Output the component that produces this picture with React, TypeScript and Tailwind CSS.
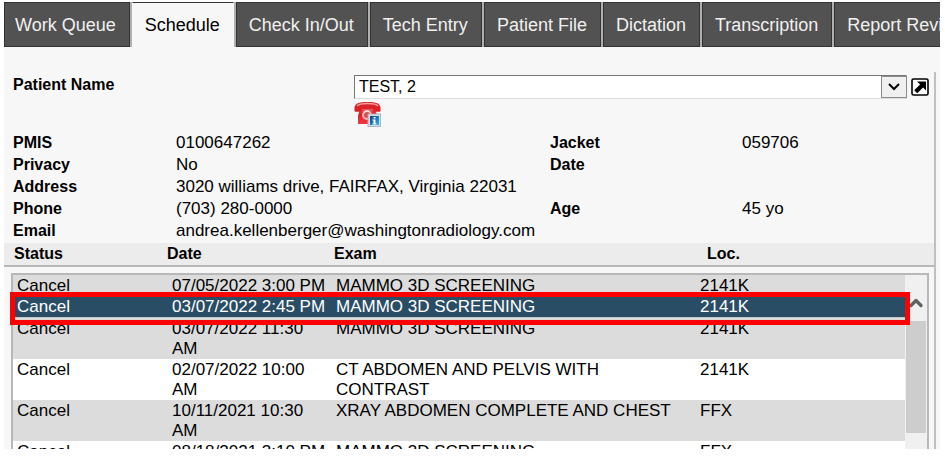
import { ChevronUp } from "lucide-react";
import clsx from "clsx";

const TABS = [
  "Work Queue",
  "Schedule",
  "Check In/Out",
  "Tech Entry",
  "Patient File",
  "Dictation",
  "Transcription",
  "Report Review",
];

const DETAILS = [
  { label: "PMIS", value: "0100647262", sideLabel: "Jacket", sideValue: "059706" },
  { label: "Privacy", value: "No", sideLabel: "Date", sideValue: "" },
  { label: "Address", value: "3020 williams drive, FAIRFAX, Virginia 22031", sideLabel: "", sideValue: "" },
  { label: "Phone", value: "(703) 280-0000", sideLabel: "Age", sideValue: "45 yo" },
  { label: "Email", value: "andrea.kellenberger@washingtonradiology.com", sideLabel: "", sideValue: "" },
];

const EXAMS = [
  { status: "Cancel", date: "07/05/2022 3:00 PM", exam: "MAMMO 3D SCREENING", loc: "2141K" },
  { status: "Cancel", date: "03/07/2022 2:45 PM", exam: "MAMMO 3D SCREENING", loc: "2141K", selected: true },
  { status: "Cancel", date: "03/07/2022 11:30 AM", exam: "MAMMO 3D SCREENING", loc: "2141K" },
  { status: "Cancel", date: "02/07/2022 10:00 AM", exam: "CT ABDOMEN AND PELVIS WITH CONTRAST", loc: "2141K" },
  { status: "Cancel", date: "10/11/2021 10:30 AM", exam: "XRAY ABDOMEN COMPLETE AND CHEST", loc: "FFX" },
  { status: "Cancel", date: "08/18/2021 3:10 PM", exam: "MAMMO 3D SCREENING", loc: "FFX" },
];

function PhoneInfoIcon() {
  return (
    <svg width="27" height="26" viewBox="0 0 27 26" aria-hidden="true">
      <defs>
        <linearGradient id="phone-red" x1="0" y1="0" x2="0" y2="1">
          <stop offset="0" stopColor="#f4696b" />
          <stop offset="0.35" stopColor="#dc1f26" />
          <stop offset="1" stopColor="#ee3b3f" />
        </linearGradient>
        <linearGradient id="info-blue" x1="0" y1="0" x2="1" y2="1">
          <stop offset="0" stopColor="#123f7c" />
          <stop offset="1" stopColor="#25b4ee" />
        </linearGradient>
      </defs>
      <path d="M6 7h15l2 8v8H4v-8z" fill="url(#phone-red)" />
      <path
        d="M0.500 7C0.500 2.500 5 1 13.500 1S26.500 2.500 26.500 7v2.500c0 .8-.5 1.300-1.300 1.300h-4.700c-.8 0-1.300-.5-1.300-1.300V8H7.800v1.500c0 .8-.5 1.300-1.300 1.300H1.800c-.8 0-1.300-.5-1.300-1.300z"
        fill="#d92228"
      />
      <path d="M3 5c2-2.200 6-2.500 10.500-2.500S22 2.800 24 5" fill="none" stroke="#f79a9a" strokeWidth="1.500" />
      <circle cx="13" cy="14" r="5" fill="#f2b6b6" />
      <circle cx="13" cy="14" r="3" fill="#e0474a" />
      <path d="M10 12.500a3.500 3.500 0 0 1 5-2" fill="none" stroke="#fff" strokeWidth="1" />
      <rect x="14" y="13" width="12.500" height="12.500" fill="#d3dee6" stroke="#a9b4bc" />
      <rect x="16" y="15" width="9" height="9" fill="url(#info-blue)" />
      <path d="M19.500 16h2v1.500h-2zM18.500 18.500h3v4h1v1h-4v-1h1v-3h-1z" fill="#fff" />
    </svg>
  );
}

function OpenIcon() {
  return (
    <svg width="18" height="18" viewBox="0 0 18 18" aria-hidden="true">
      <rect x="1" y="1" width="16" height="16" rx="1.500" fill="#fff" stroke="#000" strokeWidth="1.600" />
      <path d="M6 3.500h9v9l-2.900-2.900L6.200 15.200 3.200 12.300l5.900-5.700z" fill="#000" />
    </svg>
  );
}

function TabBar() {
  return (
    <div role="tablist" className="flex gap-0.5 overflow-hidden bg-[#b0b0b0]">
      {TABS.map((tab) => (
        <button
          key={tab}
          role="tab"
          aria-selected={tab === "Schedule"}
          className={clsx(
            "h-[45px] shrink-0 whitespace-nowrap border pr-[13px] pl-3 text-lg first:pl-2.5",
            tab === "Schedule"
              ? "border-x-[#f7f7f7] border-b-[#f7f7f7] border-t-[#333] bg-[#f7f7f7] text-black"
              : "border-[#333] bg-[#525252] text-[#f0f0f0]"
          )}
        >
          {tab}
        </button>
      ))}
    </div>
  );
}

function PatientPicker() {
  return (
    <div className="grid grid-cols-[341px_1fr] pl-[9px] pr-[5px]">
      <label htmlFor="patient" className="text-base leading-5 font-bold">
        Patient Name
      </label>
      <div>
        <div className="flex items-center gap-1">
          <div className="relative grow">
            <select
              id="patient"
              className="block h-6 w-full appearance-none border border-b-[#ddd] border-l-[#777] border-r-[#ddd] border-t-[#777] bg-white px-1 text-base leading-5"
            >
              <option>TEST, 2</option>
            </select>
            <span className="pointer-events-none absolute inset-y-0 right-0 my-px flex w-[26px] items-center justify-center border border-[#8a8a8a] bg-[#f0f0f0]">
              <svg width="12" height="8" viewBox="0 0 12 8" fill="none" stroke="#000" strokeWidth="2" aria-hidden="true">
                <path d="M1 1l5 5 5-5" />
              </svg>
            </span>
          </div>
          <button aria-label="Open patient">
            <OpenIcon />
          </button>
        </div>
        <button aria-label="Contact information" className="mt-0.5 block">
          <PhoneInfoIcon />
        </button>
      </div>
    </div>
  );
}

function PatientDetails() {
  return (
    <dl className="pt-[5px] pb-px pl-[9px]">
      {DETAILS.map((row) => (
        <div
          key={row.label}
          className="grid grid-cols-[163px_1fr_192px_192px] text-[17px] leading-[22px]"
        >
          <dt className="text-base leading-[22px] font-bold">{row.label}</dt>
          <dd>{row.value}</dd>
          {row.sideLabel && (
            <>
              <dt className="text-base leading-[22px] font-bold">{row.sideLabel}</dt>
              <dd>{row.sideValue}</dd>
            </>
          )}
        </div>
      ))}
    </dl>
  );
}

function ExamList() {
  return (
    <div className="relative mt-1.5 mr-[5px] ml-[7px]">
      <div className="flex h-[176px] overflow-hidden border-2 border-b-0 border-[#b8b8b8] bg-[#f0f0f0]">
        <table aria-label="Exams" className="w-full table-fixed self-start text-[17px] leading-5">
          <colgroup>
            <col className="w-[155px]" />
            <col className="w-[164px]" />
            <col />
            <col className="w-[209px]" />
          </colgroup>
          <tbody>
            {EXAMS.map((row) => (
              <tr
                key={row.date}
                className={clsx(
                  "align-top",
                  row.selected
                    ? "border-b border-[#c8c8c8] bg-[#2a4d66] text-white"
                    : "odd:bg-[#dcdcdc] even:bg-white"
                )}
              >
                <td className="pt-px pl-1">{row.status}</td>
                <td className="pt-px pr-1 pl-1">{row.date}</td>
                <td className="pt-px pr-3 pl-1">{row.exam}</td>
                <td className="pt-px pl-1">{row.loc}</td>
              </tr>
            ))}
          </tbody>
        </table>
        <div className="flex w-[22px] shrink-0 flex-col px-px">
          <button aria-label="Scroll up" className="flex h-[46px] items-end justify-center pb-1.5 text-[#606060]">
            <ChevronUp size={24} strokeWidth={4} />
          </button>
          <div className="h-[112px] bg-[#cdcdcd]" />
        </div>
      </div>
      {/* Callout round the selected exam */}
      <div className="pointer-events-none absolute top-[19px] right-[19px] -left-px h-[33px] border-5 border-[#ff0000]" />
    </div>
  );
}

export default function App() {
  return (
    <div className="bg-white pt-0.5 pr-[5px] pb-2 pl-1 font-['Liberation_Sans',Arial,sans-serif] text-black">
      <TabBar />
      <main className="bg-[#f7f7f7] pt-[25px] pr-1">
        <div className="border-r-2 border-[#c0c0c0] pt-[3px]">
          <PatientPicker />
          <PatientDetails />
          <table className="w-full table-fixed border-b-2 border-[#b8b8b8] bg-[#ececec] text-left text-base leading-[22px]">
            <thead>
              <tr>
                <th className="w-[163px] pl-2.5">Status</th>
                <th className="w-[167px]">Date</th>
                <th>Exam</th>
                <th className="w-[227px]">Loc.</th>
              </tr>
            </thead>
          </table>
          <ExamList />
        </div>
      </main>
    </div>
  );
}
